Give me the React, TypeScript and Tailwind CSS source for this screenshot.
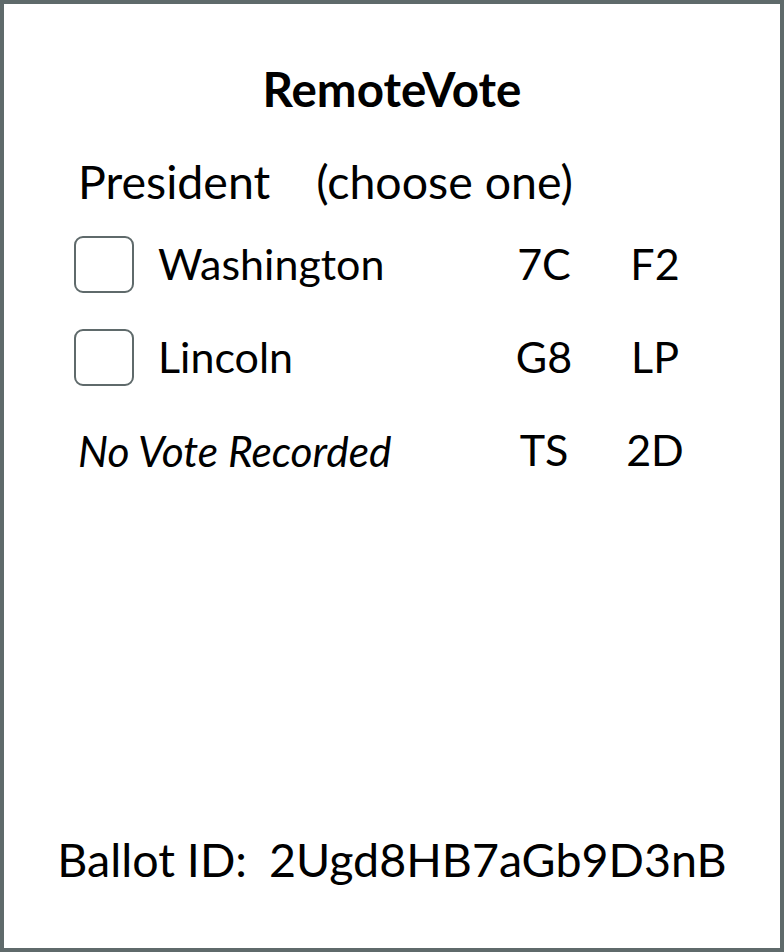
const candidates = [
  { name: "Washington", codes: ["7C", "F2"] },
  { name: "Lincoln", codes: ["G8", "LP"] },
];

function CodeCells({ codes }: { codes: string[] }) {
  return (
    <>
      <span className="w-[60px] text-center">{codes[0]}</span>
      <span className="ml-[51px] w-[60px] text-center">{codes[1]}</span>
    </>
  );
}

export default function App() {
  return (
    <div
      className="w-[784px] h-[952px] bg-white border-4 border-[#5f6a6b] flex flex-col text-black"
      style={{ fontFamily: "Lato, 'Open Sans', sans-serif" }}
    >
      <h1 className="mt-[57px] text-center text-[47.5px] leading-[56px] font-bold">
        RemoteVote
      </h1>

      <div className="mt-[36px] pl-[74px] flex text-[46.5px] leading-[56px]">
        <span>President</span>
        <span className="ml-[46px]">(choose one)</span>
      </div>

      <div className="mt-[27px] flex flex-col gap-[36px] pl-[70px] text-[43px]">
        {candidates.map((c) => (
          <div key={c.name} className="flex items-center h-[57px]">
            <div className="w-[440px] flex items-center">
              <span className="w-[60px] h-[57px] rounded-[9px] border-2 border-[#5f6a6b] shrink-0" />
              <span className="ml-[24px]">{c.name}</span>
            </div>
            <CodeCells codes={c.codes} />
          </div>
        ))}
        <div className="flex items-center h-[57px]">
          <div className="w-[440px] pl-[4px] italic text-[42.4px]">
            No Vote Recorded
          </div>
          <CodeCells codes={["TS", "2D"]} />
        </div>
      </div>

      <div className="mt-auto mb-[61px] text-center text-[46.6px] leading-[56px]">
        Ballot ID:<span className="ml-[22px]">2Ugd8HB7aGb9D3nB</span>
      </div>
    </div>
  );
}
